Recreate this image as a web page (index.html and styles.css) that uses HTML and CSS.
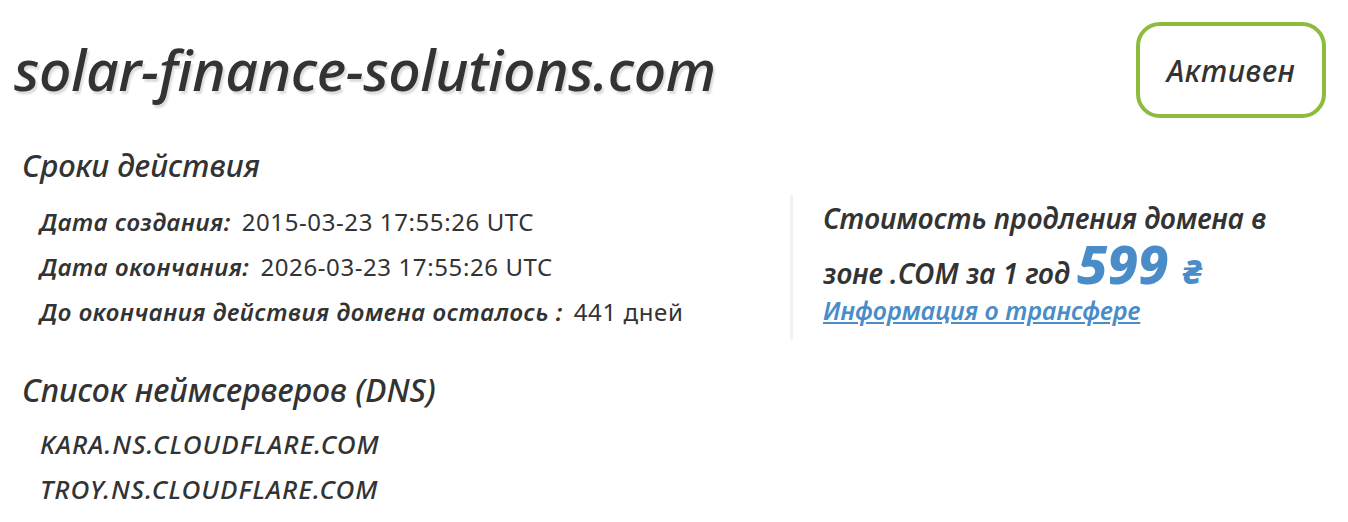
FILE: index.html
```html
<!DOCTYPE html>
<html lang="ru">

<head>
    <meta charset="UTF-8">
    <meta name="viewport" content="width=device-width, initial-scale=1.0">

    <link rel="stylesheet" href="styles.css">

    <title>solar-finance-solutions.com</title>
</head>

<body>
    <div class="container">
        <div class="header">
            <h1 class="domain">solar-finance-solutions.com</h1>
            <div class="status">Активен</div>
        </div>

        <h2 class="section-title">Сроки действия</h2>

        <div class="period">
            <ul class="dates">
                <li><span class="key">Дата создания:</span> <span class="value">2015-03-23 17:55:26 UTC</span></li>
                <li><span class="key">Дата окончания:</span> <span class="value">2026-03-23 17:55:26 UTC</span></li>
                <li><span class="key">До окончания действия домена осталось :</span> <span class="value">441 дней</span></li>
            </ul>

            <div class="renew">
                <div class="renew-text">
                    <div class="renew-line">Стоимость продления домена в</div>
                    <div class="renew-line">
                        <span class="renew-label">зоне .COM за 1 год</span>
                        <span class="price">599</span><span class="currency">₴</span>
                    </div>
                </div>
                <a href="#" class="transfer">Информация о трансфере</a>
            </div>
        </div>

        <h2 class="section-title dns-title">Список неймсерверов (DNS)</h2>

        <ul class="ns">
            <li>KARA.NS.CLOUDFLARE.COM</li>
            <li>TROY.NS.CLOUDFLARE.COM</li>
        </ul>
    </div>
</body>

</html>
```

FILE: styles.css
```css
*,
*::before,
*::after {
    box-sizing: border-box;
}

body {
    margin: 0;
    color: #333;
    background: #fff;
    font-family: 'Noto Sans', 'Open Sans', sans-serif;
}

.container {
    padding: 20px 22px 0 14px;
}

.header {
    display: flex;
    justify-content: space-between;
    align-items: flex-start;
}

.domain {
    margin: 14px 0 0;
    font-size: 57px;
    font-style: italic;
    font-weight: 500;
    line-height: 70px;
    letter-spacing: -0.4px;
    text-shadow: 2px 3px 2px #ddd;
}

.status {
    margin: 2px 0 0;
    width: 190px;
    height: 96px;
    border: 4px solid #8dbb3e;
    border-radius: 24px;
    display: flex;
    align-items: center;
    justify-content: center;
    font-size: 30px;
    font-style: italic;
    font-weight: 500;
    letter-spacing: 0.5px;
}

.section-title {
    margin: 25px 0 0 8px;
    font-size: 31px;
    font-style: italic;
    font-weight: 500;
    line-height: 44px;
}

.period {
    display: flex;
    align-items: flex-start;
    margin-top: 8px;
}

.dates {
    list-style: none;
    margin: 0;
    padding: 4px 0 0 26px;
    width: 776px;
}

.dates li {
    font-size: 24px;
    line-height: 45px;
    letter-spacing: 0.6px;
}

.key {
    font-style: italic;
    font-weight: 600;
    margin-right: 4px;
}

.renew {
    border-left: 3px solid #f2f2f2;
    padding: 0 0 0 30px;
    height: 145px;
}

.renew-text {
    width: 470px;
    margin-top: -2px;
    font-size: 28px;
    font-style: italic;
    font-weight: 600;
    line-height: 50px;
}

.renew-line {
    height: 50px;
    white-space: nowrap;
}

.price,
.currency {
    color: #4a8cc8;
    font-weight: 800;
    line-height: 40px;
}

.price {
    font-size: 54px;
}

.currency {
    margin-left: 14px;
    font-size: 34px;
}

.transfer {
    display: inline-block;
    margin-top: 2px;
    color: #4a8cc8;
    font-size: 25px;
    font-style: italic;
    font-weight: 600;
    line-height: 30px;
}

.dns-title {
    margin-top: 28px;
    font-size: 32px;
}

.ns {
    list-style: none;
    margin: 10px 0 0;
    padding: 0 0 0 26px;
}

.ns li {
    font-size: 26px;
    font-style: italic;
    font-weight: 500;
    line-height: 45px;
    letter-spacing: 1px;
}
```
